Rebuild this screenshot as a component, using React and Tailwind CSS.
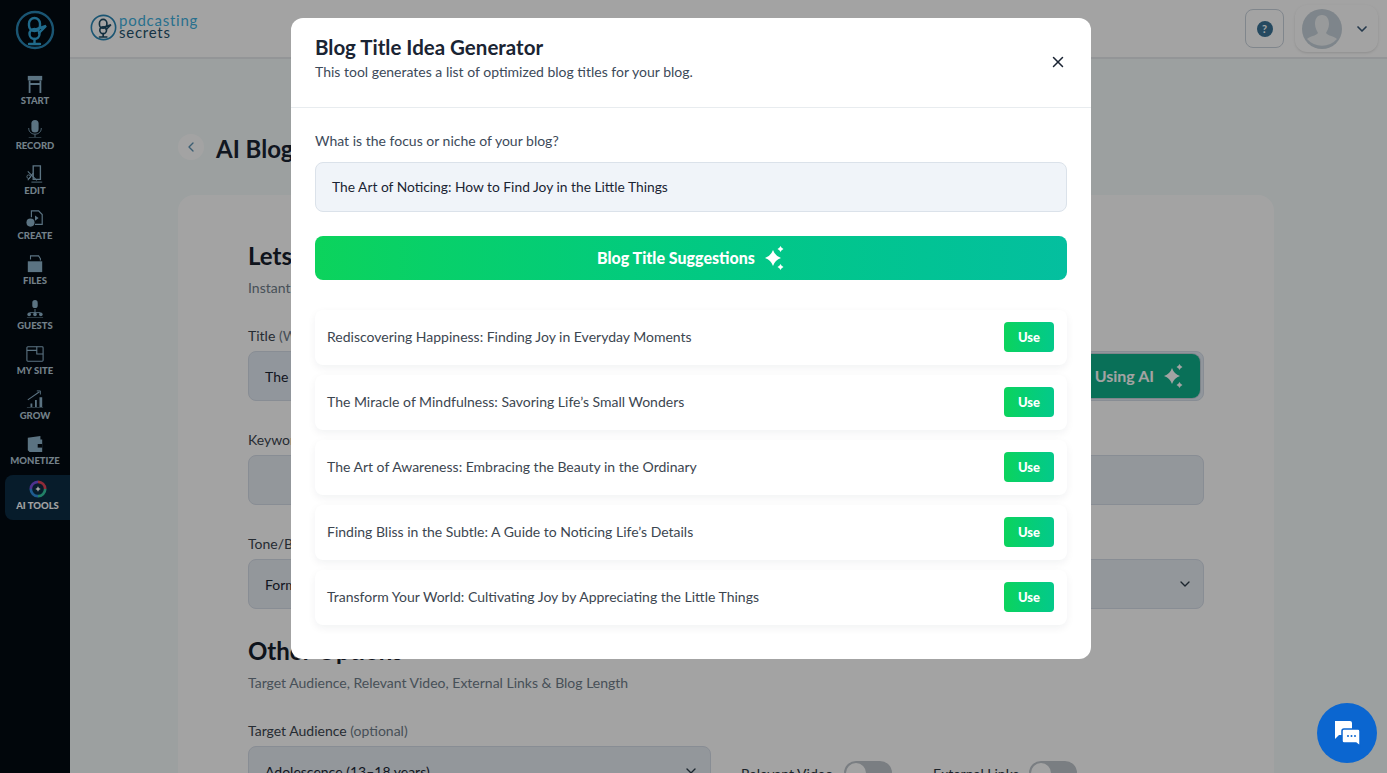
import { ChevronDown, ChevronLeft, X } from 'lucide-react';

const font = { fontFamily: 'Lato, "Noto Sans", sans-serif' };

const Sparkles = ({ className }) => (
    <svg viewBox="0 0 20 24" className={className} fill="currentColor">
        <path d="M8 4Q10 10 16 12 10 14 8 20 6 14 0 12 6 10 8 4z" />
        <path d="M15.500 0Q16.300 2.200 18.500 3 16.300 3.800 15.500 6 14.700 3.800 12.500 3 14.700 2.200 15.500 0z" />
        <path d="M15.500 18Q16.300 20.200 18.500 21 16.300 21.800 15.500 24 14.700 21.800 12.500 21 14.700 20.200 15.500 18z" />
    </svg>
);

const MicLogo = ({ className, stroke = '#33a8dc', ring = '#2a86b4', second = '#33a8dc' }) => (
    <svg viewBox="0 0 40 40" className={className} fill="none" strokeWidth="2.400" strokeLinecap="round">
        <circle cx="20" cy="20" r="18" stroke={ring} />
        <rect x="14" y="8" width="11" height="13" rx="5.500" stroke={stroke} />
        <circle cx="19.500" cy="24" r="5" stroke={second} />
        <path d="M22 19l9-3-7 7" stroke={stroke} />
        <path d="M19.500 29v4M14 34h11" stroke={second} />
    </svg>
);

const icons = {
    START: (
        <>
            <rect x="2" y="1" width="16" height="5" fill="currentColor" />
            <path d="M4 6v14M16 6v14M4 10h12" stroke="currentColor" strokeWidth="2" />
        </>
    ),
    RECORD: (
        <>
            <rect x="6" y="0" width="8" height="14" rx="4" fill="currentColor" />
            <path d="M3 9c0 9 14 9 14 0M10 16v3M3 20h14" stroke="currentColor" strokeWidth="1" fill="none" />
        </>
    ),
    EDIT: (
        <>
            <path d="M8 1h8v15H8z" stroke="currentColor" strokeWidth="1.500" fill="none" />
            <path d="M2 7l10 10M2 17L8 9" stroke="currentColor" strokeWidth="1.200" fill="none" />
            <circle cx="3" cy="13" r="2" stroke="currentColor" fill="none" />
            <path d="M6 19h12" stroke="currentColor" />
        </>
    ),
    CREATE: (
        <>
            <path d="M6 8V1h8l4 4v11h-8" stroke="currentColor" strokeWidth="1.300" fill="none" />
            <path d="M10 6l4 3-4 3z" fill="currentColor" />
            <circle cx="5" cy="14" r="4.500" fill="currentColor" />
        </>
    ),
    FILES: (
        <>
            <path d="M5 5V1h9l2 3v2" stroke="currentColor" strokeWidth="1.200" fill="none" />
            <path d="M2 7h16v12H2z" fill="currentColor" />
        </>
    ),
    GUESTS: (
        <>
            <rect x="7" y="0" width="6" height="9" rx="3" fill="currentColor" />
            <path d="M10 10v4M4 14h12" stroke="currentColor" />
            <circle cx="3.500" cy="16" r="2" fill="currentColor" />
            <circle cx="10" cy="16" r="2" fill="currentColor" />
            <circle cx="16.500" cy="16" r="2" fill="currentColor" />
            <path d="M1 20h18" stroke="currentColor" />
        </>
    ),
    'MY SITE': (
        <>
            <rect x="1" y="2" width="18" height="16" rx="1" stroke="currentColor" strokeWidth="1.200" fill="none" />
            <path d="M1 6h11M12 2v8h7" stroke="currentColor" strokeWidth="1.200" fill="none" />
        </>
    ),
    GROW: (
        <>
            <path d="M2 11L15 2" stroke="currentColor" strokeWidth="1.200" />
            <path d="M12 1h4v4" stroke="currentColor" fill="none" />
            <path d="M5 15h2v4H5zM10 11h2v8h-2zM15 8h3v11h-3z" fill="currentColor" />
            <path d="M1 20h18" stroke="currentColor" />
        </>
    ),
    MONETIZE: (
        <>
            <path d="M2 3l14-2v4h2v14H4l-2-2z" fill="currentColor" />
            <path d="M13 10h5v4h-5z" fill="#020a12" />
        </>
    ),
};

const navItems = ['START', 'RECORD', 'EDIT', 'CREATE', 'FILES', 'GUESTS', 'MY SITE', 'GROW', 'MONETIZE'];

const titles = [
    'Rediscovering Happiness: Finding Joy in Everyday Moments',
    'The Miracle of Mindfulness: Savoring Life’s Small Wonders',
    'The Art of Awareness: Embracing the Beauty in the Ordinary',
    'Finding Bliss in the Subtle: A Guide to Noticing Life’s Details',
    'Transform Your World: Cultivating Joy by Appreciating the Little Things',
];

const Toggle = () => (
    <div className="w-12 h-6 rounded-full bg-[#bfc6cc] p-0.5 shrink-0">
        <div className="w-5 h-5 rounded-full bg-white" />
    </div>
);

const Sidebar = () => (
    <aside className="w-[70px] h-full shrink-0 bg-[#020a12] flex flex-col items-center">
        <MicLogo className="w-[40px] h-[40px] mt-[10px] mb-[20px] shrink-0" />
        <nav className="w-full flex flex-col">
            {navItems.map((item) => (
                <div key={item} className="h-[45px] flex flex-col items-center justify-start text-[#8fb4cc]">
                    <svg viewBox="0 0 20 20" className="w-[18px] h-[18px] mt-[5px]">{icons[item]}</svg>
                    <span className="text-[9.500px] leading-[12px] mt-[2px] font-black text-[#b4c8d6]">{item}</span>
                </div>
            ))}
            <div className="h-[45px] ml-[5px] rounded-l-lg bg-[#0c2c44] flex flex-col items-center justify-start">
                <svg viewBox="0 0 20 20" className="w-[18px] h-[18px] mt-[5px]" fill="none" strokeWidth="3">
                    <path d="M10 2a8 8 0 0 1 8 8" stroke="#e0455a" />
                    <path d="M18 10a8 8 0 0 1-8 8" stroke="#35c8a0" />
                    <path d="M10 18a8 8 0 0 1-8-8" stroke="#2f8fe0" />
                    <path d="M2 10a8 8 0 0 1 8-8" stroke="#7a4fe0" />
                    <path d="M10 7l1 2 2 1-2 1-1 2-1-2-2-1 2-1z" fill="#ffffff" stroke="none" />
                </svg>
                <span className="text-[9.500px] leading-[12px] mt-[2px] font-black text-white">AI TOOLS</span>
            </div>
        </nav>
    </aside>
);

const Header = () => (
    <header className="h-[59px] shrink-0 bg-white border-b-2 border-[#e6eaec] flex items-center justify-between pl-5 pr-[9px]">
        <div className="flex items-center gap-[2px] -mt-[3px]">
            <MicLogo className="w-[27px] h-[27px]" stroke="#1c4a63" second="#1c4a63" ring="#2a86b4" />
            <div className="flex flex-col leading-[12px] -mt-[2px]">
                <span className="text-[15px] tracking-wider text-[#3fb0de]">podcasting</span>
                <span className="text-[15px] tracking-wider text-[#24526c]">secrets</span>
            </div>
        </div>
        <div className="flex items-center gap-[11px]">
            <div className="w-[39px] h-[39px] rounded-lg border border-[#c9d2dc] flex items-center justify-center">
                <div className="w-4 h-4 rounded-full bg-[#3a7396] text-white text-[11px] font-bold leading-4 text-center">?</div>
            </div>
            <div className="w-[83px] h-[47px] rounded-xl shadow flex items-center pl-[7px] gap-[12px]">
                <svg viewBox="0 0 40 40" className="w-10 h-10">
                    <circle cx="20" cy="20" r="20" fill="#c6d1d9" />
                    <path d="M20 6c5 0 7 4 7 9 0 4-2 7-3 9 2 3 8 3 11 6a20 20 0 0 1-30 0c3-3 9-3 11-6-1-2-3-5-3-9 0-5 2-9 7-9z" fill="#eef1f3" />
                </svg>
                <ChevronDown className="w-4 h-4 text-[#3b5a78]" strokeWidth={2.500} />
            </div>
        </div>
    </header>
);

const Field = ({ label, hint, children }) => (
    <div className="flex flex-col gap-[5px]">
        <label className="text-[14px] leading-[20px] text-[#3c4650]">
            {label} {hint && <span className="text-[#6f7d8a]">{hint}</span>}
        </label>
        {children}
    </div>
);

const Page = () => (
    <main className="flex-1 min-h-0 overflow-hidden bg-[#f5fbfb] pl-[108px] pr-[113px] pt-[75px]">
        <div className="flex items-center gap-3 h-[26px] mb-[35px]">
            <div className="w-[26px] h-[26px] rounded-full bg-white flex items-center justify-center">
                <ChevronLeft className="w-4 h-4 text-[#5f93b5]" />
            </div>
            <h1 className="text-[24px] font-bold text-[#1a2433] pt-[4px]">AI Blog Generator</h1>
        </div>
        <section className="bg-white rounded-2xl pl-[70px] pr-[70px] pt-[46px] h-[640px]">
            <h2 className="text-[24px] leading-[30px] font-bold text-[#16202c]">Lets Get Started</h2>
            <p className="text-[14px] leading-[20px] mt-[7px] text-[#6f7d8a]">Instantly generate a blog post</p>
            <div className="mt-[28px] flex flex-col gap-[29px]">
                <Field label="Title" hint="(What is your blog about?)">
                    <div className="relative h-[50px] rounded-lg bg-[#e3ebf5] border border-[#d5dde8] flex items-center px-4 text-[14px] text-[#1a2433]">
                        The Art of Noticing
                        <div className="absolute right-[3px] top-[2px] h-[44px] w-[250px] rounded-lg bg-[#0fb08a] ring-1 ring-[#c6d0da] flex items-center justify-end pr-4 gap-2.5 text-white font-bold text-[16px]">
                            Generate Using AI
                            <Sparkles className="w-[20px] h-[24px]" />
                        </div>
                    </div>
                </Field>
                <Field label="Keywords" hint="(optional)">
                    <div className="h-[50px] rounded-lg bg-[#e6ecf2] border border-[#d5dde8]" />
                </Field>
                <Field label="Tone/Brand Voice">
                    <div className="h-[50px] rounded-lg bg-[#e6ecf2] border border-[#d5dde8] flex items-center justify-between pl-4 pr-[10px] text-[14px] text-[#1a2433]">
                        Formal
                        <ChevronDown className="w-4 h-4 text-[#2c3a48]" />
                    </div>
                </Field>
            </div>
            <h2 className="text-[24px] leading-[30px] font-bold text-[#16202c] mt-[27px]">Other Options</h2>
            <p className="text-[14px] leading-[20px] mt-[7px] text-[#6f7d8a]">Target Audience, Relevant Video, External Links &amp; Blog Length</p>
            <div className="mt-[28px] flex items-end gap-[30px]">
                <div className="w-[463px] shrink-0">
                    <Field label="Target Audience" hint="(optional)">
                        <div className="h-[50px] rounded-lg bg-[#e6ecf2] border border-[#d5dde8] flex items-center justify-between pl-4 pr-[11px] text-[14px] text-[#1a2433]">
                            Adolescence (13–18 years)
                            <ChevronDown className="w-4 h-4 text-[#2c3a48]" />
                        </div>
                    </Field>
                </div>
                <div className="flex items-center gap-[41px] mb-[11px]">
                    <div className="flex items-center gap-[11px] text-[14px] text-[#2c3640]">
                        Relevant Video <Toggle />
                    </div>
                    <div className="flex items-center gap-2.5 text-[14px] text-[#2c3640]">
                        External Links <Toggle />
                    </div>
                </div>
            </div>
        </section>
    </main>
);

const Modal = () => (
    <div className="absolute left-[291px] top-[18px] w-[800px] h-[641px] bg-white rounded-xl flex flex-col">
        <div className="h-[90px] shrink-0 border-b border-[#e8ecef] px-6 pt-[16px] flex items-start justify-between">
            <div>
                <h3 className="text-[20.500px] leading-[26px] font-bold text-[#1a2433]">Blog Title Idea Generator</h3>
                <p className="text-[14px] leading-[20px] mt-[2px] text-[#3c4a5a]">This tool generates a list of optimized blog titles for your blog.</p>
            </div>
            <X className="w-[18px] h-[18px] mt-[19px] text-[#1a2433]" />
        </div>
        <div className="px-6 pt-[23px] flex flex-col">
            <label className="text-[14px] leading-[20px] text-[#3c4a5a]">What is the focus or niche of your blog?</label>
            <div className="mt-[11px] h-[50px] rounded-lg bg-[#f0f4f9] border border-[#dbe2ea] flex items-center px-4 text-[13.800px] text-[#1a2433]">
                The Art of Noticing: How to Find Joy in the Little Things
            </div>
            <button className="mt-6 h-[44px] rounded-lg bg-gradient-to-r from-[#0cd35c] to-[#04bf9f] text-white font-black text-[16px] flex items-center justify-center gap-2.5">
                Blog Title Suggestions
                <Sparkles className="w-[20px] h-[24px]" />
            </button>
            <div className="mt-[30px] flex flex-col gap-[10px]">
                {titles.map((title) => (
                    <div key={title} className="h-[55px] rounded-lg bg-white shadow-[0_3px_8px_rgba(20,30,50,0.06)] flex items-center justify-between pl-3 pr-[13px] pb-px text-[14px] text-[#3c4650]">
                        <span className="mb-[2px]">{title}</span>
                        <button className="w-[50px] h-[30px] pt-px rounded bg-gradient-to-r from-[#0cd35c] to-[#04c98a] text-white text-[13px] font-black">Use</button>
                    </div>
                ))}
            </div>
        </div>
    </div>
);

const App = () => (
    <div className="relative w-full h-screen overflow-hidden flex" style={font}>
        <Sidebar />
        <div className="flex-1 min-w-0 h-full flex flex-col">
            <Header />
            <Page />
        </div>
        <div className="absolute inset-0 bg-black/36" />
        <Modal />
        <div className="absolute right-[10px] bottom-[10px] w-[60px] h-[60px] rounded-full bg-[#0b66d0] flex items-center justify-center">
            <svg viewBox="0 0 30 30" className="w-[30px] h-[30px]">
                <path d="M3 3h15a2 2 0 0 1 2 2v12H7l-4 4z" fill="#ffffff" />
                <path d="M12 11h14a2 2 0 0 1 2 2v12l0 3-4-3H12a2 2 0 0 1-2-2V13a2 2 0 0 1 2-2z" fill="#ffffff" stroke="#0b66d0" strokeWidth="1.500" />
                <circle cx="16" cy="18" r="1" fill="#0b66d0" />
                <circle cx="19.500" cy="18" r="1" fill="#0b66d0" />
                <circle cx="23" cy="18" r="1" fill="#0b66d0" />
            </svg>
        </div>
    </div>
);

export default App;
